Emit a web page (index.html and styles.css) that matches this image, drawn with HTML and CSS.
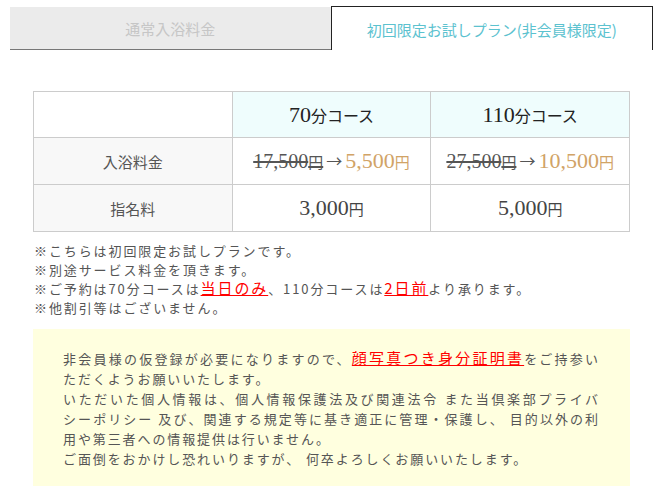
FILE: index.html
```html
<!DOCTYPE html>
<html lang="ja">
<head>
<meta charset="utf-8">
<link rel="stylesheet" href="styles.css">
</head>
<body>
<div class="page">
  <div class="tabs">
    <div class="tab tab-off">通常入浴料金</div>
    <div class="tab tab-on">初回限定お試しプラン(非会員様限定)</div>
  </div>
  <div class="content">
    <table class="price">
      <tr class="head">
        <th class="blank"></th>
        <th class="course"><span class="num">70</span>分コース</th>
        <th class="course"><span class="num">110</span>分コース</th>
      </tr>
      <tr>
        <th class="label">入浴料金</th>
        <td><span class="old">17,500<span class="yen">円</span></span><span class="arrow">→</span><span class="new">5,500<span class="yen">円</span></span></td>
        <td><span class="old">27,500<span class="yen">円</span></span><span class="arrow">→</span><span class="new">10,500<span class="yen">円</span></span></td>
      </tr>
      <tr>
        <th class="label">指名料</th>
        <td><span class="fee">3,000<span class="yen">円</span></span></td>
        <td><span class="fee">5,000<span class="yen">円</span></span></td>
      </tr>
    </table>
    <div class="notes">
      <p>※こちらは初回限定お試しプランです。</p>
      <p>※別途サービス料金を頂きます。</p>
      <p>※ご予約は70分コースは<span class="red">当日のみ</span>、110分コースは<span class="red">2日前</span>より承ります。</p>
      <p>※他割引等はございません。</p>
    </div>
    <div class="notice">
      <p>非会員様の仮登録が必要になりますので、<span class="red">顔写真つき身分証明書</span>をご持参いただくようお願いいたします。</p>
      <p>いただいた個人情報は、個人情報保護法及び関連法令 また当倶楽部プライバシーポリシー 及び、関連する規定等に基き適正に管理・保護し、 目的以外の利用や第三者への情報提供は行いません。</p>
      <p>ご面倒をおかけし恐れいりますが、 何卒よろしくお願いいたします。</p>
    </div>
  </div>
</div>
</body>
</html>
```
FILE: styles.css
```css
* { box-sizing: border-box; }
html, body { margin: 0; padding: 0; background: #fff; }
body {
  font-family: "Noto Sans CJK JP", "Noto Sans", sans-serif;
  color: #555;
}
p { margin: 0; }
.page { width: 664px; }
.tabs {
  display: flex;
  padding: 6px 11px 0 10px;
}
.tab {
  flex: 1 1 0;
  height: 44px;
  display: flex;
  align-items: center;
  justify-content: center;
  font-size: 15px;
}
.tab-off {
  background: #ebebeb;
  color: #c6c6c6;
  margin-top: 1px;
  height: 43px;
  border-bottom: 1px solid #777;
}
.tab-on {
  background: #fff;
  color: #5cc2cf;
  border: 1px solid #222;
  border-bottom: none;
  padding-top: 2px;
}
.content {
  padding: 41px 34px 0 33px;
}
.price {
  width: 597px;
  border-collapse: collapse;
  table-layout: fixed;
  font-family: "Liberation Serif", "Noto Sans CJK JP", serif;
}
.price th, .price td {
  border: 1px solid #ccc;
  height: 47px;
  text-align: center;
  vertical-align: middle;
  padding: 0;
  font-weight: normal;
}
.price .head th { height: 46px; }
.price .blank { background: #fff; }
.price .course {
  background: #effdfd;
  color: #222;
  font-size: 16px;
}
.price .num { font-size: 22px; }
.price .label {
  background: #f8f8f8;
  font-family: "Noto Sans CJK JP", sans-serif;
  font-size: 15px;
  color: #555;
}
.price td { background: #fff; }
.old {
  font-size: 20px;
  color: #555;
  text-decoration: line-through;
}
.yen { font-size: 15px; }
.arrow {
  font-family: "Noto Sans CJK JP", sans-serif;
  font-size: 16px;
  color: #555;
  margin: 0 3px;
  vertical-align: 1px;
}
.new {
  font-size: 22px;
  color: #d1a366;
}
.fee {
  font-size: 22px;
  color: #444;
}
.notes {
  margin-top: 10px;
  font-size: 13px;
  letter-spacing: 1.9px;
  line-height: 18.5px;
  padding-left: 1px;
}
.red {
  color: #f00;
  font-size: 15px;
  text-decoration: underline;
}
.notice {
  margin-top: 12px;
  background: #ffffdf;
  padding: 19px 30px 17px 30px;
  font-size: 13px;
  letter-spacing: 1.9px;
  line-height: 20px;
  text-align: justify;
  line-break: strict;
}
```
